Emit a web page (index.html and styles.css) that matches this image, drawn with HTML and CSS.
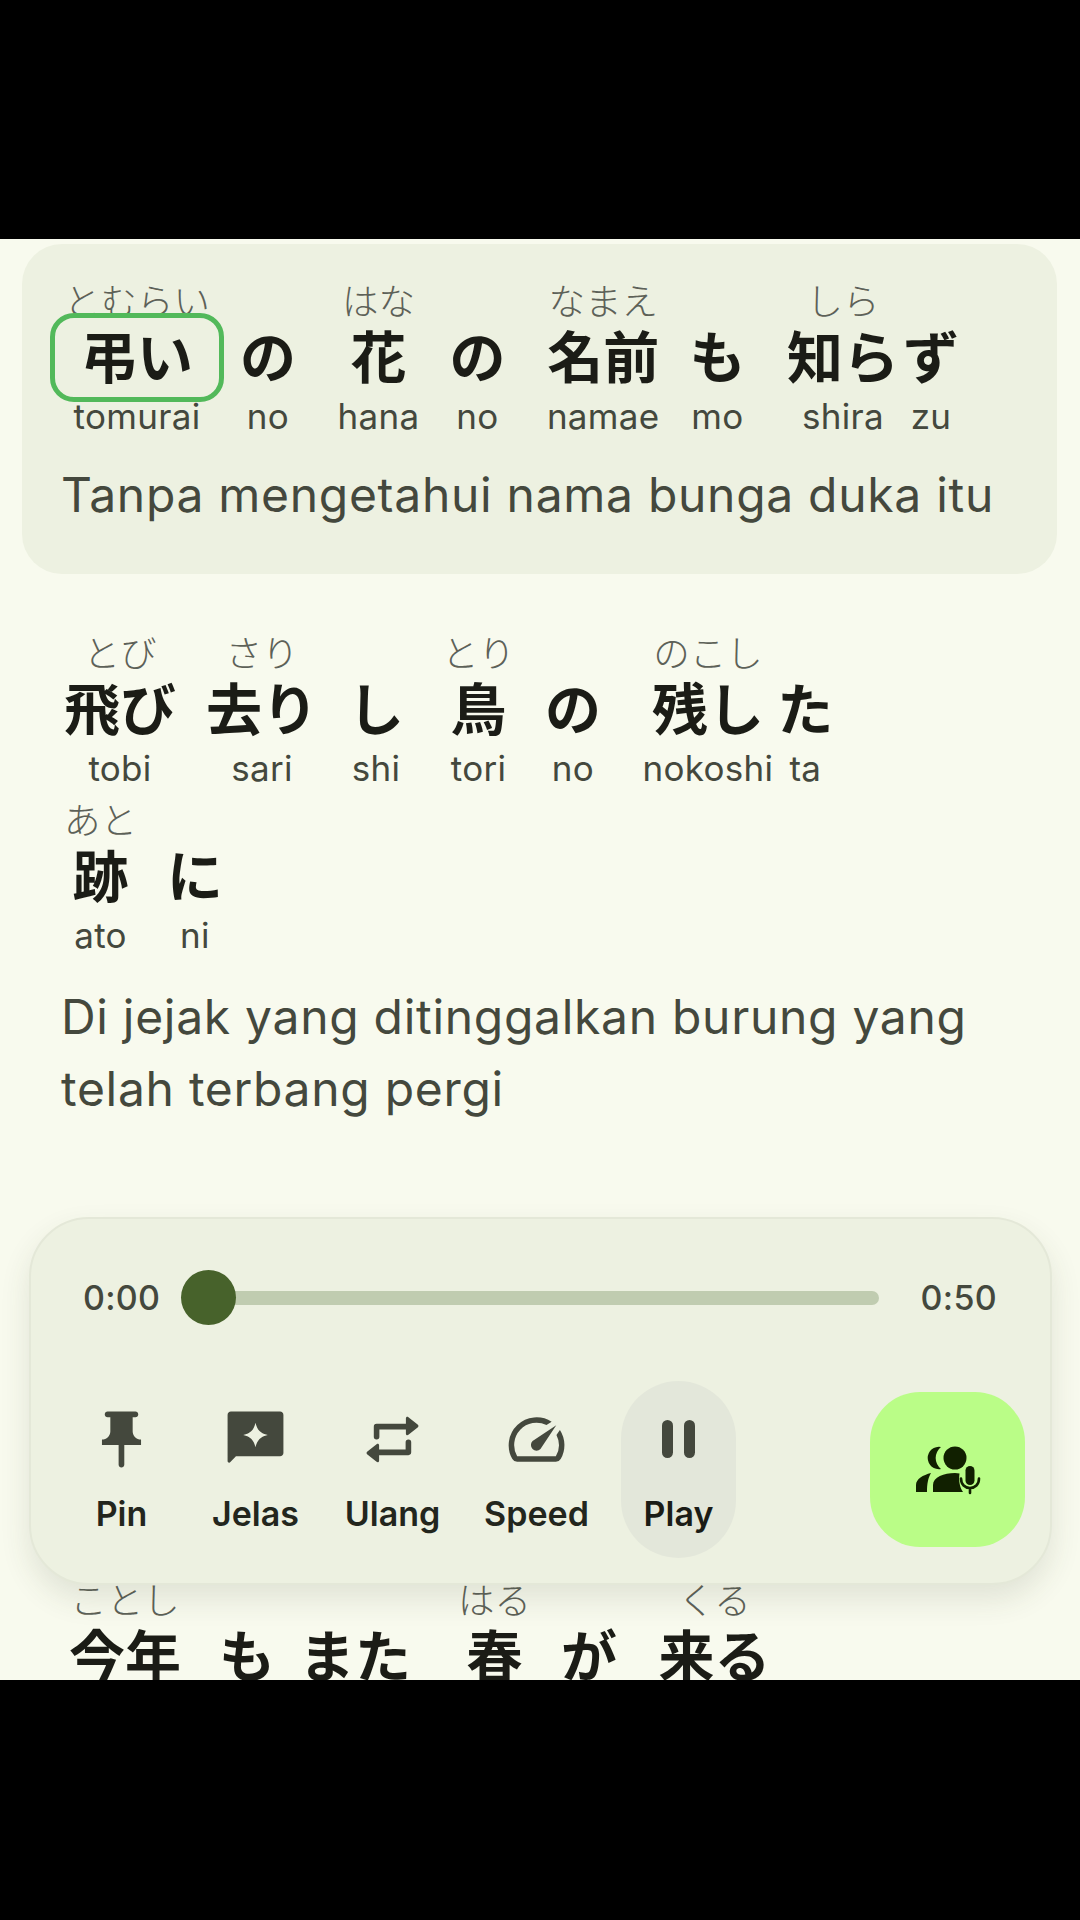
FILE: index.html
```html
<!DOCTYPE html>
<html lang="id">
<head>
    <meta charset="UTF-8">
    <meta name="viewport" content="width=device-width, initial-scale=1.0">
    <title>Lirik</title>
    <link rel="stylesheet" href="styles.css">
</head>
<body>
    <div class="screen">
        <div class="verse verse-active">
            <div class="line">
                <div class="seg"><span class="kana">とむらい</span><span class="word word-current">弔い</span><span class="roma">tomurai</span></div>
                <div class="seg"><span class="kana"></span><span class="word">の</span><span class="roma">no</span></div>
                <div class="seg gap-wide"><span class="kana">はな</span><span class="word">花</span><span class="roma">hana</span></div>
                <div class="seg"><span class="kana"></span><span class="word">の</span><span class="roma">no</span></div>
                <div class="seg gap-wide"><span class="kana">なまえ</span><span class="word">名前</span><span class="roma">namae</span></div>
                <div class="seg"><span class="kana"></span><span class="word">も</span><span class="roma">mo</span></div>
                <div class="seg gap-wide"><span class="kana">しら</span><span class="word">知ら</span><span class="roma">shira</span></div>
                <div class="seg gap-tight"><span class="kana"></span><span class="word">ず</span><span class="roma">zu</span></div>
            </div>
            <p class="translation">Tanpa mengetahui nama bunga duka itu</p>
        </div>

        <div class="verse">
            <div class="line">
                <div class="seg"><span class="kana">とび</span><span class="word">飛び</span><span class="roma">tobi</span></div>
                <div class="seg"><span class="kana">さり</span><span class="word">去り</span><span class="roma">sari</span></div>
                <div class="seg"><span class="kana"></span><span class="word">し</span><span class="roma">shi</span></div>
                <div class="seg gap-mid"><span class="kana">とり</span><span class="word">鳥</span><span class="roma">tori</span></div>
                <div class="seg"><span class="kana"></span><span class="word">の</span><span class="roma">no</span></div>
                <div class="seg gap-wide"><span class="kana">のこし</span><span class="word">残し</span><span class="roma">nokoshi</span></div>
                <div class="seg gap-tight"><span class="kana"></span><span class="word">た</span><span class="roma">ta</span></div>
            </div>
            <div class="line">
                <div class="seg"><span class="kana">あと</span><span class="word">跡</span><span class="roma">ato</span></div>
                <div class="seg"><span class="kana"></span><span class="word">に</span><span class="roma">ni</span></div>
            </div>
            <p class="translation">Di jejak yang ditinggalkan burung yang telah terbang pergi</p>
        </div>

        <div class="verse verse-next">
            <div class="line">
                <div class="seg"><span class="kana">ことし</span><span class="word">今年</span></div>
                <div class="seg gap-mid"><span class="kana"></span><span class="word">も</span></div>
                <div class="seg gap-small"><span class="kana"></span><span class="word">また</span></div>
                <div class="seg gap-xwide"><span class="kana">はる</span><span class="word">春</span></div>
                <div class="seg"><span class="kana"></span><span class="word">が</span></div>
                <div class="seg gap-wide"><span class="kana">くる</span><span class="word">来る</span></div>
            </div>
        </div>

        <div class="player">
            <div class="progress">
                <span class="time">0:00</span>
                <div class="track"><div class="thumb"></div></div>
                <span class="time">0:50</span>
            </div>
            <div class="controls">
                <button class="ctl ctl-pin">
                    <svg class="ctl-icon" viewBox="0 0 24 24"><path d="M16 9V4h1c.55 0 1-.45 1-1s-.45-1-1-1H7c-.55 0-1 .45-1 1s.45 1 1 1h1v5c0 1.66-1.34 3-3 3v2h5.97v7c0 .55.45 1 1 1s1.03-.45 1.03-1v-7H19v-2c-1.66 0-3-1.34-3-3z"/></svg>
                    <span>Pin</span>
                </button>
                <button class="ctl ctl-jelas">
                    <svg class="ctl-icon" viewBox="0 0 24 24"><path fill-rule="evenodd" d="M3.2 2h17.6c.66 0 1.2.54 1.2 1.2v13.6c0 .66-.54 1.2-1.2 1.2H5l-2 2.1c-.4.4-1 .1-1-.4V3.2C2 2.54 2.54 2 3.2 2zM12 6c.6 2.6 1.8 3.8 4.4 4.4-2.6.6-3.8 1.8-4.4 4.4-.6-2.6-1.8-3.8-4.4-4.4C10.2 9.800 11.400 8.600 12 6z"/></svg>
                    <span>Jelas</span>
                </button>
                <button class="ctl ctl-ulang">
                    <svg class="ctl-icon" viewBox="0 0 24 24"><path class="line-icon" d="M6.300 11V7.400h11M17.700 13v3.600h-11"/><path d="M16.800 4.400c0-.5.5-.7.9-.4l3.300 2.600c.4.300.4.800 0 1.100l-3.300 2.600c-.4.300-.9.100-.9-.4zM7.200 19.600c0 .5-.5.7-.9.4l-3.300-2.600c-.4-.3-.4-.8 0-1.100l3.300-2.600c.4-.3.900-.1.900.4z"/></svg>
                    <span>Ulang</span>
                </button>
                <button class="ctl ctl-speed">
                    <svg class="ctl-icon" viewBox="0 0 24 24"><path d="M20.380 8.570l-1.230 1.850a8 8 0 0 1-.22 7.580H5.070A8 8 0 0 1 15.580 6.850l1.850-1.230A10 10 0 0 0 3.350 19a2 2 0 0 0 1.720 1h13.850a2 2 0 0 0 1.740-1 10 10 0 0 0-.27-10.440zm-9.790 6.840a2 2 0 0 0 2.830 0l5.660-8.490-8.490 5.660a2 2 0 0 0 0 2.830z"/></svg>
                    <span>Speed</span>
                </button>
                <button class="ctl ctl-play">
                    <svg class="ctl-icon" viewBox="0 0 67 67"><rect x="17" y="14" width="11" height="38" rx="5.500"/><rect x="39" y="14" width="11" height="38" rx="5.500"/></svg>
                    <span>Play</span>
                </button>
                <button class="voice">
                    <svg class="voice-icon" viewBox="0 0 64 46">
                        <path d="M25 0A11.200 11.200 0 1 0 25 22A14 14 0 0 1 25 0Z"/>
                        <circle cx="39" cy="11" r="11.500"/>
                        <path d="M15 26C12 31 11 37 11 45H0V38C0 32 7 28 15 26Z"/>
                        <path d="M17 45V38C17 30 28 26 39 26C40.500 26 42 26.200 43.500 26.500C42.500 33 43.500 40 47 45Z"/>
                        <rect x="49.500" y="19" width="9" height="19" rx="4.500"/>
                        <path class="voice-arc" d="M45 31.500C45 37.500 49 41 54 41S63 37.500 63 31.500M54 41V46"/>
                    </svg>
                </button>
            </div>
        </div>
    </div>
</body>
</html>
```

FILE: styles.css
```css
body {
    margin: 0;
    height: 1920px;
    background-color: #000;
    font-family: "Inter", "Noto Sans CJK JP", sans-serif;
    overflow: hidden;
}
.screen {
    position: relative;
    margin-top: 239px;
    height: 1441px;
    background-color: #f8faee;
    overflow: hidden;
    color: #1b1c16;
}
.verse {
    padding: 0 40px 0 61px;
    margin-top: 60px;
}
.verse-active {
    margin: 5px 23px 0 22px;
    padding: 38px 20px 43px 39px;
    background-color: #edf1e1;
    border-radius: 40px;
}
.verse-next {
    margin-top: 456px;
}
.verse-next .line {
    padding-left: 8px;
}
.line {
    display: flex;
    padding-left: 3px;
    margin-bottom: 11px;
}
.seg {
    display: flex;
    flex-direction: column;
    align-items: center;
    margin-left: 30px;
}
.seg:first-child {
    margin-left: 0;
}
.seg.gap-xwide {
    margin-left: 47px;
}
.seg.gap-wide {
    margin-left: 41.5px;
}
.seg.gap-mid {
    margin-left: 38px;
}
.seg.gap-small {
    margin-left: 24px;
}
.seg.gap-tight {
    margin-left: 4px;
}
.kana {
    height: 40px;
    line-height: 40px;
    font-size: 36.5px;
    font-weight: 300;
    color: #5d6158;
    white-space: nowrap;
}
.word {
    position: relative;
    height: 72px;
    line-height: 72px;
    font-size: 56px;
    font-weight: 700;
    white-space: nowrap;
}
.word-current::before {
    content: "";
    position: absolute;
    top: -9px;
    bottom: -8px;
    left: -31px;
    right: -31px;
    border: 5px solid #52b95a;
    border-radius: 24px;
}
.roma {
    height: 44px;
    line-height: 44px;
    font-size: 35px;
    letter-spacing: 0.3px;
    color: #44483d;
    white-space: nowrap;
}
.translation {
    margin: 24px 0 0;
    font-size: 48px;
    line-height: 72px;
    letter-spacing: 0.7px;
    color: #44483d;
}
.verse-active .translation {
    margin-top: 21px;
}
.player {
    position: absolute;
    left: 29px;
    right: 28px;
    top: 978px;
    height: 368px;
    box-sizing: border-box;
    padding: 51px 25px 24px 34px;
    border: 2px solid #e4e8d8;
    border-radius: 60px;
    background-color: #edf1e1;
    box-shadow: 0 14px 30px rgba(60, 65, 45, 0.12);
}
.progress {
    display: flex;
    align-items: center;
    height: 55px;
    padding: 0 28px 0 18px;
}
.time {
    font-size: 34px;
    font-weight: 500;
    letter-spacing: 0.3px;
    color: #44483d;
}
.track {
    position: relative;
    flex: 1;
    height: 14px;
    margin: 0 42px 0 26px;
    border-radius: 7px;
    background-color: #c0ccb0;
}
.thumb {
    position: absolute;
    left: -5px;
    top: -21px;
    width: 55px;
    height: 55px;
    border-radius: 50%;
    background-color: #47622b;
}
.controls {
    display: flex;
    align-items: center;
    margin-top: 56px;
}
.ctl {
    display: flex;
    flex-direction: column;
    align-items: center;
    height: 177px;
    box-sizing: border-box;
    padding: 25px 0 0;
    border: none;
    background: none;
    font-family: inherit;
    font-size: 34px;
    font-weight: 600;
    line-height: 40px;
    color: #23261d;
}
.ctl-icon {
    width: 67px;
    height: 67px;
    margin-bottom: 21px;
    fill: #44483d;
}
.line-icon {
    fill: none;
    stroke: #44483d;
    stroke-width: 2;
    stroke-linecap: round;
    stroke-linejoin: round;
}
.ctl-pin { width: 113px; }
.ctl-jelas { width: 155px; }
.ctl-ulang { width: 119px; }
.ctl-speed { width: 169px; }
.ctl-play {
    width: 115px;
    border-radius: 58px;
    background-color: #e3e7da;
    color: #1b1c16;
}
.voice {
    display: flex;
    align-items: center;
    justify-content: center;
    width: 155px;
    height: 155px;
    margin-left: auto;
    padding: 0;
    border: none;
    border-radius: 50px;
    background-color: #bafd87;
}
.voice-icon {
    width: 64px;
    height: 46px;
    fill: #112000;
    overflow: visible;
}
.voice-arc {
    fill: none;
    stroke: #112000;
    stroke-width: 2.6;
    stroke-linecap: round;
}
```
